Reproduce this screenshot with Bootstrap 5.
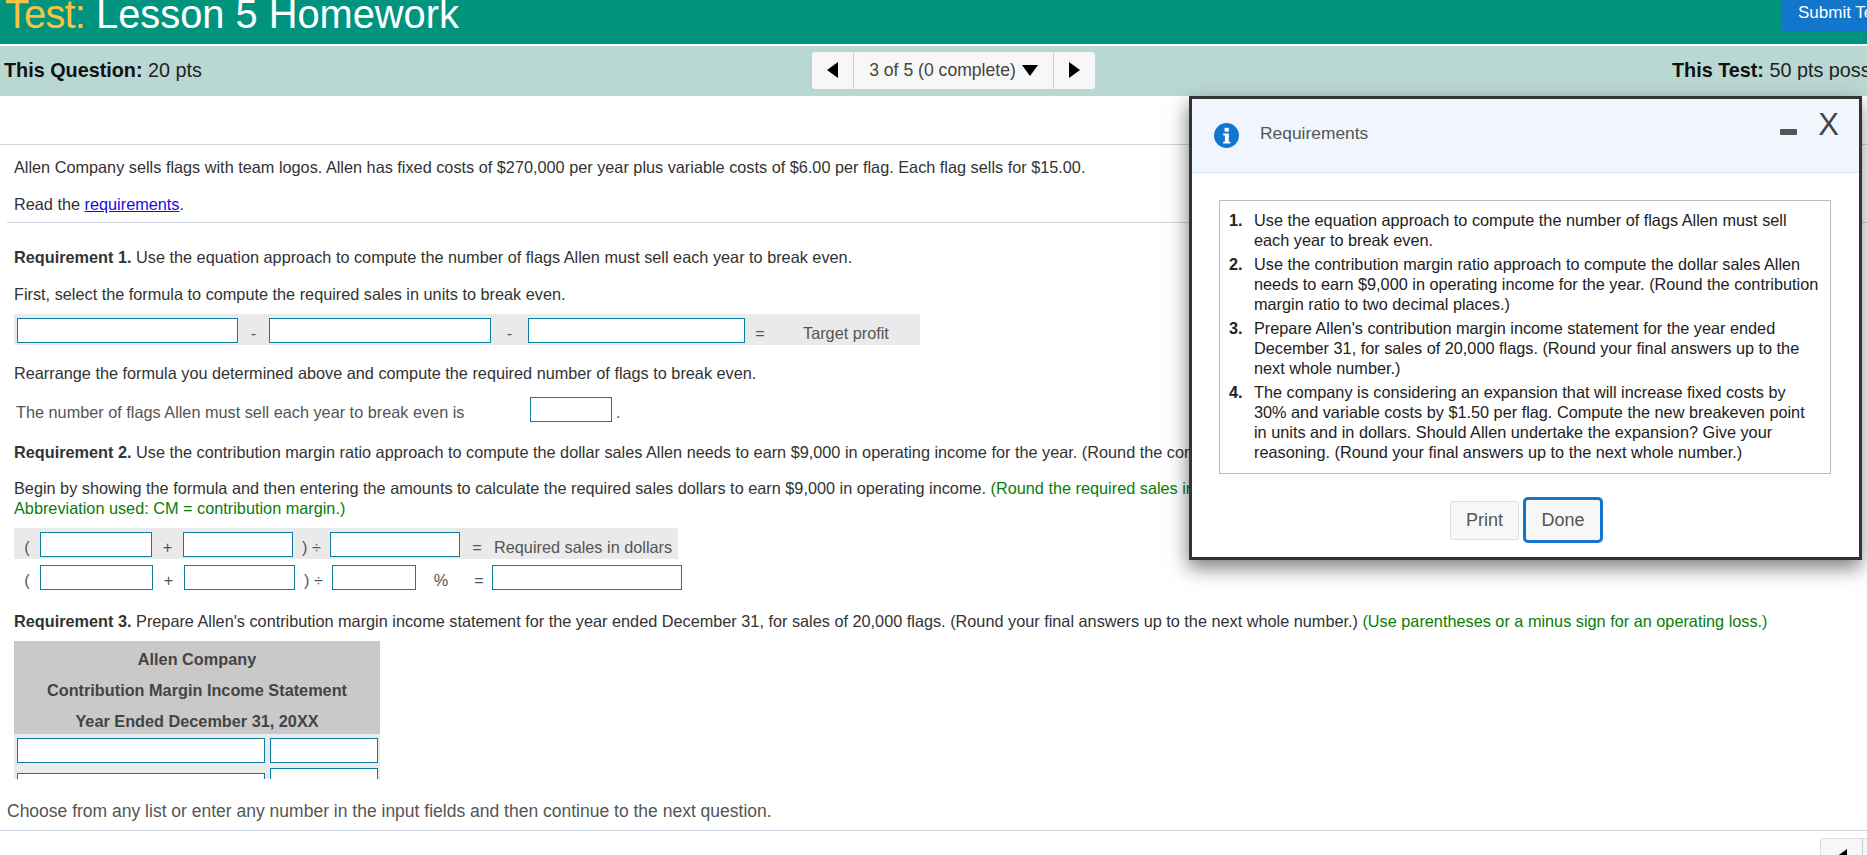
<!DOCTYPE html>
<html lang="en"><head><meta charset="utf-8"><title>Test: Lesson 5 Homework</title>
<link href="https://cdn.jsdelivr.net/npm/bootstrap@5.3.0/dist/css/bootstrap.min.css" rel="stylesheet">
<style>
html,body{height:855px;overflow:hidden;margin:0}
body{font-family:"Liberation Sans",Arial,sans-serif;font-size:16.27px;line-height:20px;color:#333;background:#fff}
.stage{position:relative;height:855px;width:1867px;overflow:hidden}
.testbar{height:44px;background:#00947f;overflow:hidden}
.testname{font-size:39.8px;line-height:40px;margin:-6px 0 0 5px;color:#fff;font-weight:400}
.testname span{color:#f9c240;letter-spacing:-.8px}
.submitbtn{width:85px;height:32px;background:#1276cc;color:#fff;border-radius:0 0 0 4px;padding:3px 0 0 16px;font-size:17px;white-space:nowrap;overflow:hidden;flex:none}
.infobar{margin-top:2px;height:50px;background:#bad8d3;font-size:19.8px;color:#222;padding:0 0 2px 4px}
.infobar b{color:#111}
.hint{white-space:nowrap;width:808px;flex:none}
.qnav{width:283px;height:37px;background:#f7f7f7;border-radius:3px;font-size:17.6px;color:#444;flex:none}
.qnav-end{width:41px;flex:none}
.qnav-mid{width:201px;flex:none;border-left:1px solid #ccc;border-right:1px solid #ccc}
.testinfo{width:195px;margin-left:auto;white-space:nowrap;overflow:hidden;flex:none}
.tri-l,.tri-r,.tri-d{width:0;height:0;display:inline-block}
.tri-l{border-style:solid;border-color:transparent #000 transparent transparent;border-width:8px 11px 8px 0}
.tri-r{border-style:solid;border-color:transparent transparent transparent #000;border-width:8px 0 8px 11px}
.tri-d{border-style:solid;border-color:#000 transparent transparent transparent;border-width:11px 8.500px 0 8.500px;margin-left:6px}
.spacer1{height:49px;border-bottom:1px solid #ccd3e0}
.qtext{padding-left:14px;white-space:nowrap}
.qtext p{height:20px;margin-bottom:0}
.rule2{margin:8px 0 0 7px;border-top:1px solid #ccd3e0;height:0}
.qtext p.vg12{margin-top:12px}.qtext p.vg16{margin-top:16px}.qtext p.vg17{margin-top:17px}.qtext p.vg18{margin-top:18px}.qtext p.vg20{margin-top:20px}.qtext p.vg21{margin-top:21px}.qtext p.vg24{margin-top:24px}.qtext p.vg0{margin-top:0}
.greentext{color:#0a7d0a}
.qlink{color:#1a0dd8}
.eqrow{margin:0 0 0 14px;height:31px;color:#555}
.eqgray{background:#eaeaea;padding-top:4px}
.eqa{margin-top:10px;width:906px;padding-left:3px}
.eqb{margin-top:14px;height:25px;padding-left:2px}
.eqc{margin-top:10px;width:664px}
.eqd{margin-top:6px;height:25px}
.numlabel{width:514px;flex:none}
.tgt{margin-left:28px}
.box{display:block;height:25px;border:1px solid #0b7ba0;background:#fff;flex:none}
.sym{flex:none;text-align:center}
.numlabel,.tgt,.sym,.eqlabel{margin-top:5px}
.bx82{width:82px}.bx84{width:84px}.bx108{width:108px}.bx110{width:110px}.bx111{width:111px}.bx112{width:112px}.bx113{width:113px}.bx130{width:130px}.bx190{width:190px}.bx217{width:217px}.bx221{width:221px}.bx222{width:222px}.bx248{width:248px}
.sy26{width:26px}.sy30{width:30px}.sy31{width:31px}.sy34{width:34px}.sy37{width:37px}.sy50{width:50px}
.sheet{margin:10px 0 0 14px;width:366px;height:138px;overflow:hidden;background:#eaeaea}
.sheethead{background:#c9c9c9;height:93px;font-weight:700;color:#444;text-align:center;padding-top:3px}
.sheethead div{height:31px;line-height:31px}
.sheetrow{gap:5px;padding:4px 0 0 3px}
.sheetrow2{padding-top:5px}
.dropbox{margin-top:5px}
.footnote{margin:22px 0 0 7px;font-size:17.5px;color:#555}
.rule3{margin-top:9px;border-top:1px solid #ccd3e0;height:0}
.pager{margin:7px 0 0 1820px;border:1px solid #ddd}
.reqdialog{position:absolute;left:1189px;top:96px;width:673px;height:464px;background:#fff;border:3px solid #333;box-shadow:-1px 8px 18px rgba(0,0,0,.5)}
.reqhead{height:74px;background:#f1f6fe;border-bottom:1px solid #d5e2f0;padding-left:22px;color:#555;font-size:17.4px}
.reqtitle{margin-left:21px;margin-bottom:5px}
.reqmin{width:17px;height:6px;background:#555;border-radius:1px;margin-left:auto;margin-bottom:8px}
.reqx{font-size:31px;color:#444;margin:0 20px 21px 21px;line-height:30px}
.reqbox{margin:27px 0 0 27px;width:612px;height:274px;border:1px solid #bbb;padding:9px 0 0 0;color:#222}
.reqbox ol{margin:0;padding:0 0 0 34px}
.reqbox li{margin-bottom:4px;padding-right:10px}
.reqbox li::marker{font-weight:700;content:counter(list-item) ".\2002\2009"}
.reqbtns{margin-top:23px;margin-left:258px}
.reqbtn{padding:0;font-size:18px;color:#555;background:#f7f7f7;border:1px solid #ddd;border-radius:3px;height:39px;width:69px;line-height:37px}
.reqbtn-on{height:46px;width:80px;border:3px solid #1276cc;border-radius:5px;margin-left:4px}
</style></head>
<body>
<div class="stage">
<header class="testbar d-flex justify-content-between align-items-start">
<h1 class="testname"><span>Test:</span> Lesson 5 Homework</h1>
<div class="submitbtn">Submit Test</div>
</header>
<div class="infobar d-flex align-items-center">
<div class="hint"><b>This Question:</b> 20 pts</div>
<div class="qnav d-flex align-items-stretch">
<div class="qnav-end d-flex align-items-center justify-content-center"><i class="tri-l"></i></div>
<div class="qnav-mid d-flex align-items-center justify-content-center">3 of 5 (0 complete)<i class="tri-d"></i></div>
<div class="qnav-end d-flex align-items-center justify-content-center"><i class="tri-r"></i></div>
</div>
<div class="testinfo"><b>This Test:</b> 50 pts possible</div>
</div>
<div class="spacer1"></div>
<section class="qtext">
<p class="vg12">Allen Company sells flags with team logos. Allen has fixed costs of $270,000 per year plus variable costs of $6.00 per flag. Each flag sells for $15.00.</p>
<p class="vg17">Read the <a class="qlink" href="#">requirements</a>.</p>
</section>
<div class="rule2"></div>
<section class="qtext">
<p class="vg24"><b>Requirement 1.</b> Use the equation approach to compute the number of flags Allen must sell each year to break even.</p>
<p class="vg17">First, select the formula to compute the required sales in units to break even.</p>
</section>
<div class="eqrow eqa eqgray d-flex align-items-start">
<span class="box bx221"></span><span class="sym sy31">-</span>
<span class="box bx222"></span><span class="sym sy37">-</span>
<span class="box bx217"></span><span class="sym sy30">=</span><span class="tgt">Target profit</span>
</div>
<section class="qtext"><p class="vg18">Rearrange the formula you determined above and compute the required number of flags to break even.</p></section>
<div class="eqrow eqb d-flex align-items-start">
<span class="numlabel">The number of flags Allen must sell each year to break even is</span><span class="box bx82"></span><span class="eqlabel ms-1">.</span>
</div>
<section class="qtext">
<p class="vg20"><b>Requirement 2.</b> Use the contribution margin ratio approach to compute the dollar sales Allen needs to earn $9,000 in operating income for the year. (Round the contribution margin ratio to two decimal places.)</p>
<p class="vg16">Begin by showing the formula and then entering the amounts to calculate the required sales dollars to earn $9,000 in operating income. <span class="greentext">(Round the required sales in dollars up to the next whole dollar.</span></p>
<p class="vg0 greentext">Abbreviation used: CM = contribution margin.)</p>
</section>
<div class="eqrow eqc eqgray d-flex align-items-start">
<span class="sym sy26">(</span><span class="box bx112"></span><span class="sym sy31">+</span><span class="box bx110"></span><span class="sym sy37">) ÷</span><span class="box bx130"></span><span class="sym sy34">=</span><span class="eqlabel">Required sales in dollars</span>
</div>
<div class="eqrow eqd d-flex align-items-start">
<span class="sym sy26">(</span><span class="box bx113"></span><span class="sym sy31">+</span><span class="box bx111"></span><span class="sym sy37">) ÷</span><span class="box bx84"></span><span class="sym sy50">%</span><span class="sym sy26">=</span><span class="box bx190"></span>
</div>
<section class="qtext"><p class="vg21"><b>Requirement 3.</b> Prepare Allen's contribution margin income statement for the year ended December 31, for sales of 20,000 flags. (Round your final answers up to the next whole number.) <span class="greentext">(Use parentheses or a minus sign for an operating loss.)</span></p></section>
<div class="sheet">
<div class="sheethead"><div>Allen Company</div><div>Contribution Margin Income Statement</div><div>Year Ended December 31, 20XX</div></div>
<div class="d-flex sheetrow"><span class="box bx248"></span><span class="box bx108"></span></div>
<div class="d-flex sheetrow sheetrow2"><span class="box bx248 dropbox"></span><span class="box bx108"></span></div>
</div>
<p class="footnote mb-0">Choose from any list or enter any number in the input fields and then continue to the next question.</p>
<div class="rule3"></div>
<div class="qnav pager d-flex align-items-stretch"><div class="qnav-end d-flex align-items-center justify-content-center"><i class="tri-l"></i></div><div class="qnav-mid"></div></div>

<div class="reqdialog">
<div class="reqhead d-flex align-items-center">
<svg width="25" height="25" viewBox="0 0 26 26" aria-hidden="true"><circle cx="13" cy="13" r="13" fill="#1276cc"/><rect x="11" y="5" width="4.4" height="4" fill="#fff"/><path d="M9.500 11h5.900v8.400h1.700v2h-7.600v-2h1.800v-6.400h-1.800z" fill="#fff"/></svg>
<span class="reqtitle">Requirements</span>
<span class="reqmin"></span><span class="reqx">X</span>
</div>
<div class="reqbox">
<ol>
<li>Use the equation approach to compute the number of flags Allen must sell each year to break even.</li>
<li>Use the contribution margin ratio approach to compute the dollar sales Allen needs to earn $9,000 in operating income for the year. (Round the contribution margin ratio to two decimal places.)</li>
<li>Prepare Allen's contribution margin income statement for the year ended December 31, for sales of 20,000 flags. (Round your final answers up to the next whole number.)</li>
<li>The company is considering an expansion that will increase fixed costs by 30% and variable costs by $1.50 per flag. Compute the new breakeven point in units and in dollars. Should Allen undertake the expansion? Give your reasoning. (Round your final answers up to the next whole number.)</li>
</ol>
</div>
<div class="reqbtns d-flex align-items-center">
<button class="btn reqbtn">Print</button><button class="btn reqbtn reqbtn-on">Done</button>
</div>
</div>
</div>
<script src="https://cdn.jsdelivr.net/npm/bootstrap@5.3.0/dist/js/bootstrap.bundle.min.js"></script>
</body></html>
